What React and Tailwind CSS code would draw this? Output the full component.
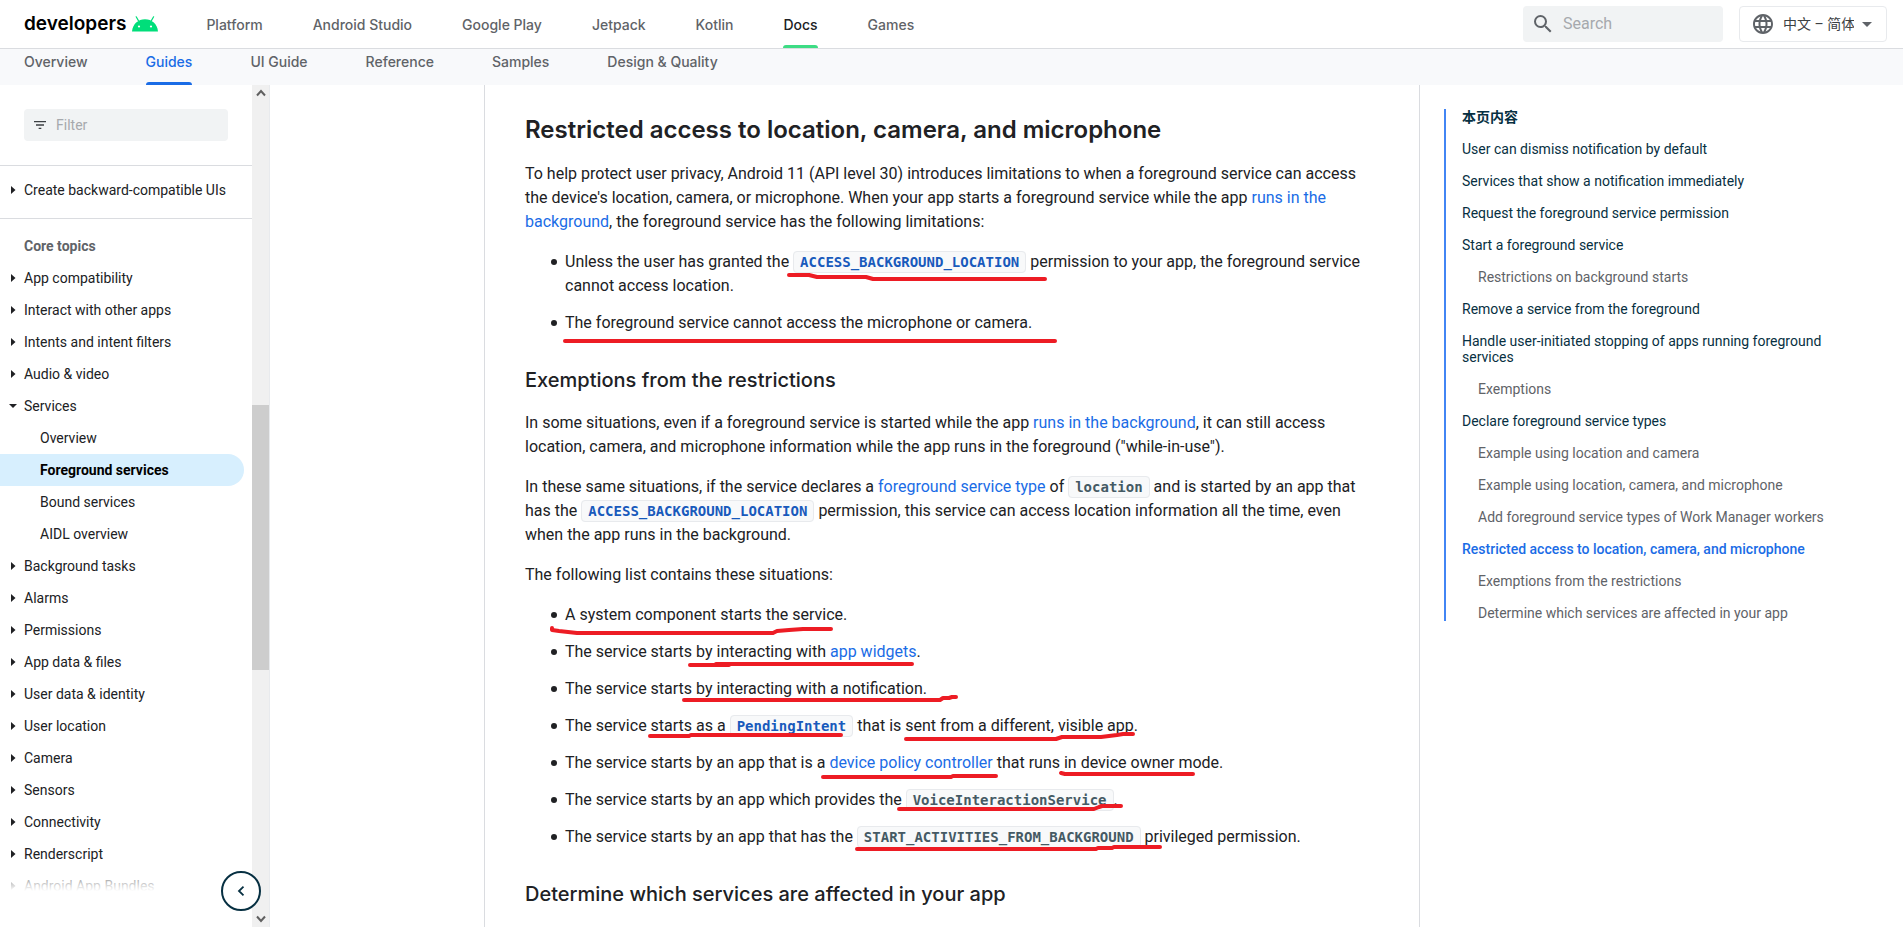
import React from "react";
import { MdSearch, MdFilterList, MdLanguage, MdArrowDropDown } from "react-icons/md";

const topTabs = ["Platform", "Android Studio", "Google Play", "Jetpack", "Kotlin", "Docs", "Games"];
const subTabs = ["Overview", "Guides", "UI Guide", "Reference", "Samples", "Design & Quality"];

const sideItems = [
  { label: "App compatibility" },
  { label: "Interact with other apps" },
  { label: "Intents and intent filters" },
  { label: "Audio & video" },
  { label: "Services", open: true, children: ["Overview", "Foreground services", "Bound services", "AIDL overview"] },
  { label: "Background tasks" },
  { label: "Alarms" },
  { label: "Permissions" },
  { label: "App data & files" },
  { label: "User data & identity" },
  { label: "User location" },
  { label: "Camera" },
  { label: "Sensors" },
  { label: "Connectivity" },
  { label: "Renderscript" },
  { label: "Android App Bundles" },
];

const toc = [
  { label: "User can dismiss notification by default" },
  { label: "Services that show a notification immediately" },
  { label: "Request the foreground service permission" },
  { label: "Start a foreground service" },
  { label: "Restrictions on background starts", sub: true },
  { label: "Remove a service from the foreground" },
  { label: "Handle user-initiated stopping of apps running foreground services" },
  { label: "Exemptions", sub: true },
  { label: "Declare foreground service types" },
  { label: "Example using location and camera", sub: true },
  { label: "Example using location, camera, and microphone", sub: true },
  { label: "Add foreground service types of Work Manager workers", sub: true },
  { label: "Restricted access to location, camera, and microphone", active: true },
  { label: "Exemptions from the restrictions", sub: true },
  { label: "Determine which services are affected in your app", sub: true },
];

const strokes = [
  "M304 190H324L332 192H381L388 194H560",
  "M80 256H570",
  "M67 543V545L74 546L92 548H288L292 546L304 545L318 544H346",
  "M205 580H244M231 579H427",
  "M199 615H455L458 613H464L467 612H471",
  "M165 651H204L206 650H356",
  "M421 654H571L577 652H616L632 650L638 649H648",
  "M338 692H466L468 691H511",
  "M576 688L580 689H708",
  "M414 724H609L614 722L617 721H636",
  "M372 764H611L613 763H627L629 762H675",
];

function AndroidHead() {
  return (
    <svg width="26" height="16" viewBox="0 0 26 16" aria-hidden="true">
      <path d="M6.400 4.600L4.200 .8M19.400 4.600L21.600 .8" fill="none" stroke="#00de7a" strokeWidth="1.200" strokeLinecap="round" />
      <path d="M0 15.500C.6 8 6.200 3.200 13 3.200S25.400 8 26 15.500Z" fill="#00de7a" />
      <circle cx="7" cy="10.500" r="1.100" fill="#fff" />
      <circle cx="19" cy="10.500" r="1.100" fill="#fff" />
    </svg>
  );
}

function Caret({ open }) {
  return (
    <svg width="8" height="8" viewBox="0 0 8 8" className="shrink-0" aria-hidden="true">
      <path d={open ? "M0 2H8L4 6Z" : "M2 0V8L6.500 4Z"} fill="#202124" />
    </svg>
  );
}

function A({ children }) {
  return <a href="#" className="text-[#1a6ce6]">{children}</a>;
}

function Code({ children, link }) {
  const box = "rounded border border-[#e8eaed] bg-[#f8f9fa] px-[6px] py-[2px] font-['DejaVu_Sans_Mono','Liberation_Mono',monospace] text-[14px] font-bold";
  if (link) {
    return (
      <a href="#">
        <code className={box + " text-[#185abc]"}>{children}</code>
      </a>
    );
  }
  return <code className={box + " text-[#455a64]"}>{children}</code>;
}

function Li({ children }) {
  return (
    <li className="relative before:absolute before:top-[9px] before:-left-[14px] before:size-[6px] before:rounded-full before:bg-[#202124]">
      {children}
    </li>
  );
}

function SideRow({ item }) {
  return (
    <li>
      <a href="#" className="flex h-8 items-center gap-[7px] pl-[9px]">
        <Caret open={item.open} />
        {item.label}
      </a>
      {item.children && (
        <ul>
          {item.children.map((c) => (
            <li key={c}>
              <a
                href="#"
                className={
                  c === "Foreground services"
                    ? "mr-2 flex h-8 items-center rounded-r-full bg-[#d7effe] pl-10 font-bold text-black"
                    : "mr-2 flex h-8 items-center pl-10"
                }
              >
                {c}
              </a>
            </li>
          ))}
        </ul>
      )}
    </li>
  );
}

function Header() {
  return (
    <header className="shrink-0 font-['Inter',sans-serif] text-[14px] font-medium text-[#5f6368]">
      <div className="flex h-[49px] items-stretch border-b border-[#dadce0] bg-white pr-4 pl-6">
        <a href="#" className="mr-12 flex items-center gap-[6px] text-[19px] font-semibold text-black">
          <span>developers</span>
          <AndroidHead />
        </a>
        <nav className="flex flex-1 gap-[50px]" aria-label="Site">
          {topTabs.map((t) => (
            <a
              key={t}
              href="#"
              className={t === "Docs" ? "relative flex items-center text-[#202124]" : "flex items-center"}
            >
              {t}
              {t === "Docs" && <span className="absolute inset-x-0 bottom-0 h-[3px] rounded-t bg-[#3ddc84]" />}
            </a>
          ))}
        </nav>
        <div className="flex items-center gap-4 font-['Roboto','Noto_Sans_CJK_SC',sans-serif]">
          <label className="flex h-9 w-[200px] items-center gap-2 rounded-sm bg-[#f1f3f4] px-2">
            <MdSearch className="size-6 shrink-0 text-[#5f6368]" />
            <input
              type="search"
              aria-label="Search"
              placeholder="Search"
              className="w-full min-w-0 bg-transparent text-[16px] font-normal outline-none placeholder:text-[#a6a9ad]"
            />
          </label>
          <label className="relative flex h-9 w-[148px] items-center rounded-sm border border-[#e8eaed]">
            <MdLanguage className="pointer-events-none absolute left-[11px] size-6 text-[#5f6368]" />
            <select
              aria-label="Language"
              className="h-full w-full appearance-none bg-transparent pr-8 pl-[43px] text-[14px] font-normal text-[#3c4043] outline-none"
            >
              <option>中文 – 简体</option>
            </select>
            <MdArrowDropDown className="pointer-events-none absolute right-[7px] size-6 text-[#5f6368]" />
          </label>
        </div>
      </div>
      <nav className="flex h-9 gap-[58px] bg-[#f8f9fb] pl-6" aria-label="Documentation">
        {subTabs.map((t) => (
          <a
            key={t}
            href="#"
            className={
              t === "Guides"
                ? "relative flex h-9 items-center pb-3 text-[#1a6ce6]"
                : "flex h-9 items-center pb-3"
            }
          >
            {t}
            {t === "Guides" && <span className="absolute inset-x-0 bottom-0 h-[3px] rounded-t bg-[#1a6ce6]" />}
          </a>
        ))}
      </nav>
    </header>
  );
}

function Sidebar() {
  return (
    <aside className="relative flex w-[270px] shrink-0 border-r border-[#e8eaed] text-[14px] text-[#202124]">
      <div className="relative min-w-0 flex-1 overflow-hidden">
        <div className="px-6 py-6">
          <label className="flex h-8 items-center gap-2 rounded bg-[#f1f3f4] px-2">
            <MdFilterList className="size-4 shrink-0 text-[#3c4043]" />
            <input
              type="text"
              aria-label="Filter"
              placeholder="Filter"
              className="w-full min-w-0 bg-transparent outline-none placeholder:text-[#a6a9ad]"
            />
          </label>
        </div>
        <ul className="border-y border-[#dadce0] pt-2 pb-3">
          <SideRow item={{ label: "Create backward-compatible UIs" }} />
        </ul>
        <h2 className="mt-[11px] flex h-8 items-center pl-6 font-bold text-[#5f6368]">Core topics</h2>
        <ul>
          {sideItems.map((i) => (
            <SideRow key={i.label} item={i} />
          ))}
        </ul>
        <div className="absolute inset-x-0 bottom-0">
          <div className="h-8 bg-linear-to-b from-white/0 to-white" />
          <div className="h-9 bg-white" />
        </div>
      </div>
      <div className="flex w-[17px] shrink-0 flex-col items-center bg-[#f0f0f0]" aria-hidden="true">
        <svg width="10" height="17" viewBox="0 0 10 17">
          <path d="M1 10.500L5 6L9 10.500" fill="none" stroke="#606060" strokeWidth="2" />
        </svg>
        <div className="flex w-full flex-1 flex-col">
          <div className="flex-[303]" />
          <div className="flex-[265] bg-[#cdcdcd]" />
          <div className="flex-[240]" />
        </div>
        <svg width="10" height="17" viewBox="0 0 10 17">
          <path d="M1 6.500L5 11L9 6.500" fill="none" stroke="#606060" strokeWidth="2" />
        </svg>
      </div>
      <button
        type="button"
        aria-label="Hide side navigation"
        className="absolute right-2 bottom-4 flex size-10 items-center justify-center rounded-full border-2 border-[#073042] bg-white"
      >
        <svg width="8" height="10" viewBox="0 0 8 10" aria-hidden="true">
          <path d="M6.500 .7L2 5L6.500 9.300" fill="none" stroke="#073042" strokeWidth="1.800" />
        </svg>
      </button>
    </aside>
  );
}

function Article() {
  const heading = "font-['Inter',sans-serif] leading-8";
  const list = "mt-4 space-y-[13px] pl-10";
  return (
    <article className="relative flex-1 overflow-hidden border-x border-[#dadce0] px-10 pt-[29px] text-[16px] leading-6">
      <h2 className={heading + " text-[24px] font-semibold"}>Restricted access to location, camera, and microphone</h2>
      <p className="mt-4">
        To help protect user privacy, Android 11 (API level 30) introduces limitations to when a foreground service can
        access the device's location, camera, or microphone. When your app starts a foreground service while the app{" "}
        <A>runs in the background</A>, the foreground service has the following limitations:
      </p>
      <ul className={list}>
        <Li>
          Unless the user has granted the <Code link>ACCESS_BACKGROUND_LOCATION</Code> permission to your app, the
          foreground service cannot access location.
        </Li>
        <Li>The foreground service cannot access the microphone or camera.</Li>
      </ul>
      <h3 className={heading + " mt-[29px] text-[20px] font-medium"}>Exemptions from the restrictions</h3>
      <p className="mt-[15px]">
        In some situations, even if a foreground service is started while the app <A>runs in the background</A>, it can
        still access location, camera, and microphone information while the app runs in the foreground
        ("while-in-use").
      </p>
      <p className="mt-4">
        In these same situations, if the service declares a <A>foreground service type</A> of <Code>location</Code> and
        is started by an app that has the <Code link>ACCESS_BACKGROUND_LOCATION</Code> permission, this service can
        access location information all the time, even when the app runs in the background.
      </p>
      <p className="mt-4">The following list contains these situations:</p>
      <ul className={list}>
        <Li>A system component starts the service.</Li>
        <Li>
          The service starts by interacting with <A>app widgets</A>.
        </Li>
        <Li>The service starts by interacting with a notification.</Li>
        <Li>
          The service starts as a <Code link>PendingIntent</Code> that is sent from a different, visible app.
        </Li>
        <Li>
          The service starts by an app that is a <A>device policy controller</A> that runs in device owner mode.
        </Li>
        <Li>
          The service starts by an app which provides the <Code>VoiceInteractionService</Code>.
        </Li>
        <Li>
          The service starts by an app that has the <Code>START_ACTIVITIES_FROM_BACKGROUND</Code> privileged
          permission.
        </Li>
      </ul>
      <h3 className={heading + " mt-[29px] text-[20px] font-medium"}>
        Determine which services are affected in your app
      </h3>
      <svg
        width="934"
        height="842"
        viewBox="0 0 934 842"
        className="pointer-events-none absolute top-0 left-0"
        aria-hidden="true"
      >
        {strokes.map((d) => (
          <path key={d} d={d} fill="none" stroke="#ed1c24" strokeWidth="4" strokeLinecap="round" strokeLinejoin="round" />
        ))}
      </svg>
    </article>
  );
}

function Toc() {
  return (
    <nav className="w-[483px] shrink-0 pt-6 pl-6" aria-label="On this page">
      <ul className="flex flex-col gap-4 border-l-2 border-[#4285f4] pr-12 pl-4 text-[14px] leading-4 text-[#073042]">
        <li className="font-bold">本页内容</li>
        {toc.map((t) => (
          <li
            key={t.label}
            className={t.sub ? "pl-4 text-[#5f6368]" : t.active ? "font-medium text-[#1a6ce6]" : ""}
          >
            <a href="#">{t.label}</a>
          </li>
        ))}
      </ul>
    </nav>
  );
}

export default function App() {
  return (
    <div className="flex h-screen flex-col overflow-hidden bg-white font-['Roboto','Noto_Sans_CJK_SC',sans-serif] text-[#202124]">
      <Header />
      <div className="flex min-h-0 flex-1">
        <Sidebar />
        <main className="flex min-w-0 flex-1 overflow-hidden pl-[214px]">
          <Article />
          <Toc />
        </main>
      </div>
    </div>
  );
}
